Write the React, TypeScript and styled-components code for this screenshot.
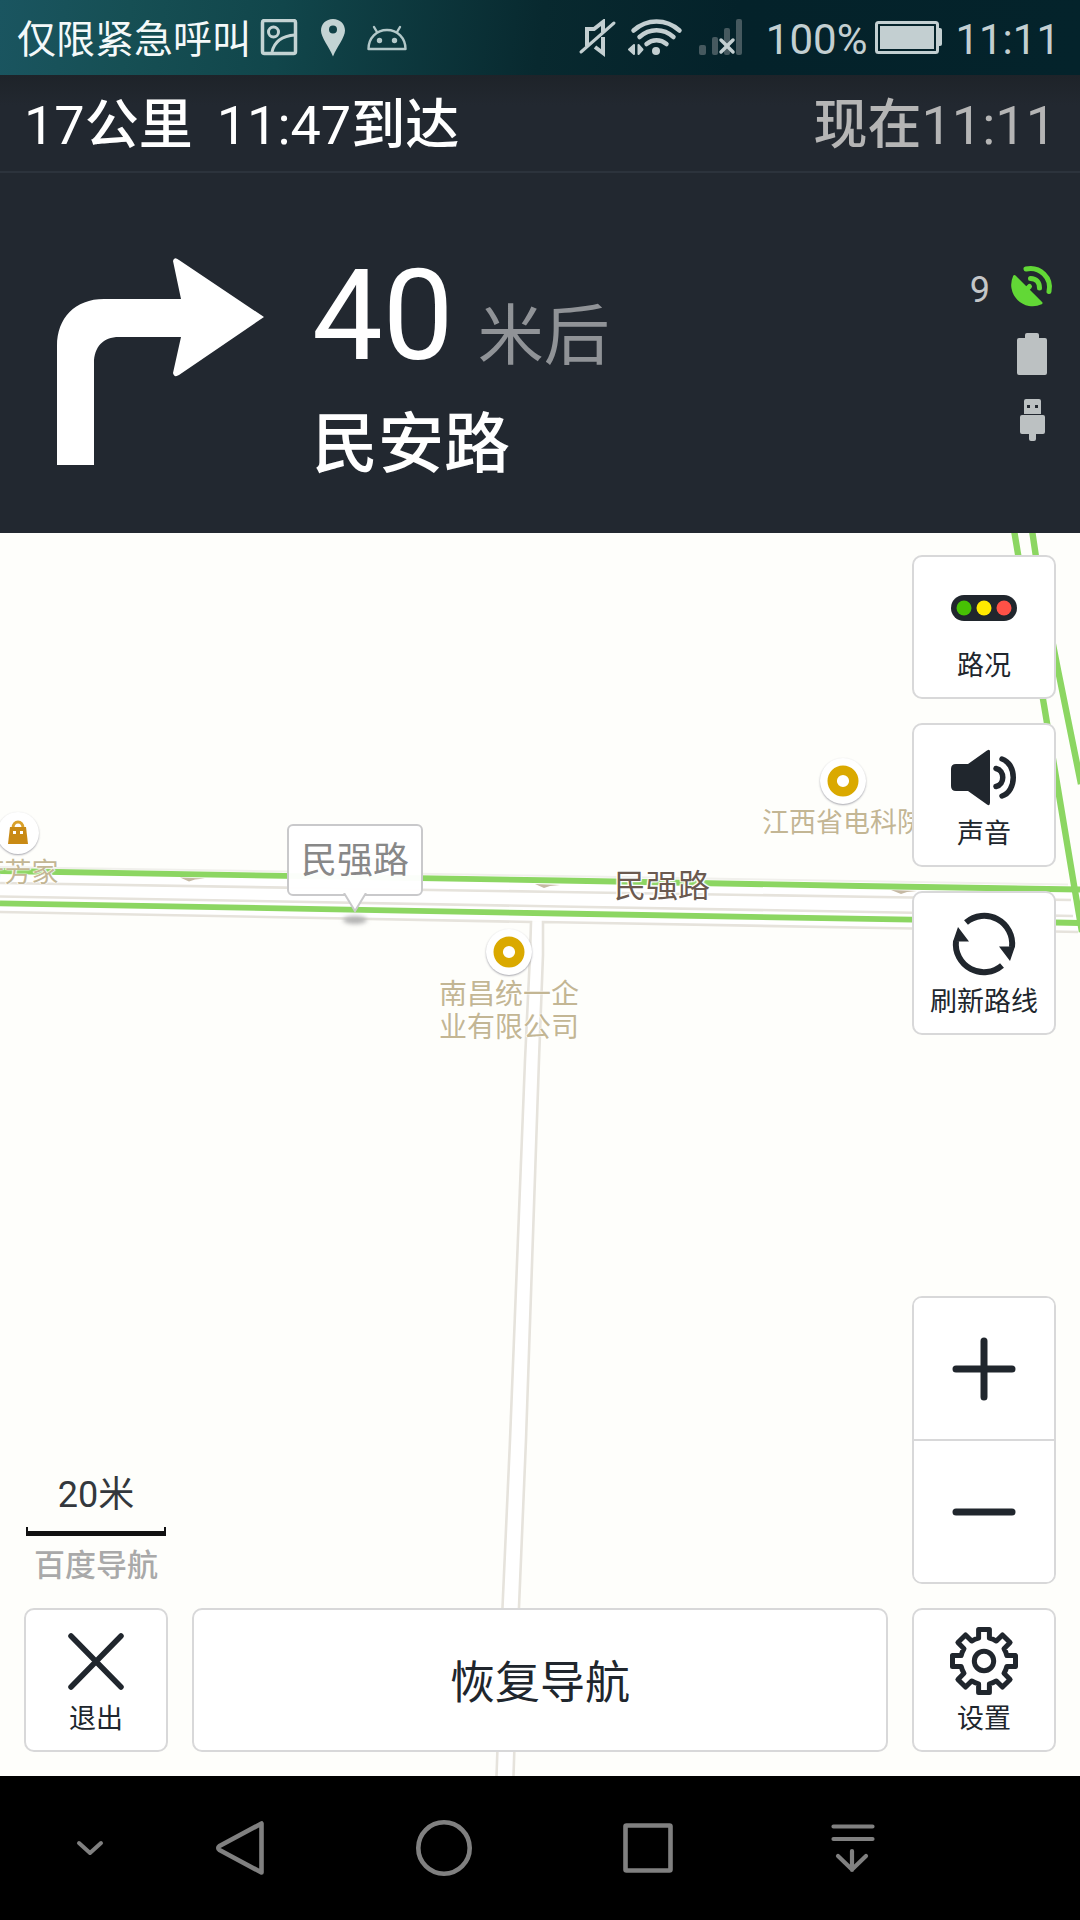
import React from "react";
import styled, { createGlobalStyle } from "styled-components";

const INK = "#20262d";
const PANEL = "#222830";

const GlobalStyle = createGlobalStyle`
  * { box-sizing: border-box; }
  body {
    margin: 0;
    background: #000;
    font-family: Roboto, "Noto Sans CJK SC", sans-serif;
  }
  button { font-family: inherit; }
`;

const Page = styled.main`
  display: flex;
  flex-direction: column;
  min-height: 100vh;
`;

/* ---------- status bar ---------- */

const StatusBar = styled.header`
  display: flex;
  align-items: center;
  justify-content: space-between;
  height: 75px;
  padding: 3px 20px 0 17px;
  color: #c3cfd1;
  background: linear-gradient(97deg, #1a5560 0%, #164f54 12%, #11464b 26%, #08292f 50%, #04222a 68%, #04232b 100%);
`;

const StatusGroup = styled.div`
  display: flex;
  align-items: center;
`;

const Carrier = styled.span`
  margin-right: 9px;
  padding-top: 2px;
  font-size: 39px;
  line-height: 44px;
  color: #f4f9f9;
`;

const StatusText = styled.span`
  padding-top: 2px;
  font-size: 42px;
  line-height: 44px;
`;

/* ---------- trip summary ---------- */

const TripBar = styled.section`
  display: flex;
  align-items: center;
  justify-content: space-between;
  height: 98px;
  padding: 6px 24px 0;
  border-bottom: 2px solid #2c333c;
  font-size: 54px;
  line-height: 64px;
  color: #fff;
  background: linear-gradient(#1e2329, ${PANEL} 30px);
`;

const TripInfo = styled.div`
  display: flex;
  gap: 24px;
`;

const TripUnit = styled.span`
  font-weight: 500;
`;

const CurrentTime = styled.span`
  color: #b5b5b5;
`;

/* ---------- turn instruction ---------- */

const TurnPanel = styled.section`
  display: flex;
  align-items: flex-start;
  gap: 48px;
  min-height: 360px;
  padding: 85px 26px 0 57px;
  color: #fff;
  background: ${PANEL};
`;

const TurnText = styled.div`
  display: flex;
  flex: 1;
  flex-direction: column;
  gap: 28px;
`;

const Distance = styled.div`
  display: flex;
  align-items: baseline;
  gap: 24px;
  font-size: 126px;
  line-height: 116px;
`;

const DistanceUnit = styled.span`
  font-size: 66px;
  line-height: 80px;
  color: #909397;
`;

const NextRoad = styled.div`
  font-size: 66px;
  font-weight: 500;
  line-height: 80px;
`;

const DeviceStatus = styled.div`
  display: flex;
  flex-direction: column;
  align-items: flex-end;
  gap: 23px;
  padding-top: 6px;
`;

const Satellites = styled.div`
  display: flex;
  align-items: center;
  gap: 20px;
  height: 44px;
  font-size: 36px;
  line-height: 44px;
  color: #c4c6c8;
`;

const SatelliteCount = styled.span`
  padding-top: 8px;
`;

/* ---------- map ---------- */

const MapArea = styled.section`
  position: relative;
  flex: 1;
  min-height: 1243px;
  overflow: hidden;
  background: #fefefb;
`;

const Roads = styled.svg`
  display: block;
  position: absolute;
  top: 0;
  left: 0;
  width: 100%;
  height: 100%;
`;

const Poi = styled.div<{ $x: number; $y: number }>`
  position: absolute;
  left: ${(p) => p.$x}px;
  top: ${(p) => p.$y}px;
  display: flex;
  flex-direction: column;
  align-items: center;
  gap: 3px;
  width: 0;
`;

const PoiDisc = styled.div<{ $size: number }>`
  display: flex;
  flex: none;
  align-items: center;
  justify-content: center;
  width: ${(p) => p.$size}px;
  height: ${(p) => p.$size}px;
  border-radius: 50%;
  background: #fff;
  box-shadow: 0 1px 2px rgba(60, 60, 80, 0.45);
`;

const PoiLabel = styled.div<{ $size: number }>`
  font-size: ${(p) => p.$size}px;
  line-height: 33px;
  text-align: center;
  white-space: pre;
  color: #c3b694;
  text-shadow: 0 0 2px #fff, 1px 0 1px #fff, -1px 0 1px #fff;
`;

const StreetName = styled.div`
  position: absolute;
  left: 614px;
  top: 333px;
  font-size: 32px;
  line-height: 40px;
  color: #6b5a50;
  text-shadow: 0 0 2px #fff, 1px 1px 1px #fff, -1px -1px 1px #fff, 1px -1px 1px #fff, -1px 1px 1px #fff;
`;

const Callout = styled.div`
  position: absolute;
  left: 287px;
  top: 291px;
  display: flex;
  flex-direction: column;
  align-items: center;
`;

const CalloutBox = styled.div`
  padding: 13px 12px 11px;
  border: 2px solid #c9c9cb;
  border-radius: 6px;
  font-size: 36px;
  line-height: 44px;
  color: #888;
  background: rgba(255, 255, 255, 0.97);
`;

const CalloutTail = styled.svg`
  margin-top: -3px;
`;

/* ---------- map controls ---------- */

const Controls = styled.div`
  position: absolute;
  inset: 0;
  display: flex;
  flex-direction: column;
  justify-content: space-between;
  padding: 22px 24px 24px;
`;

const SideButtons = styled.div`
  display: flex;
  flex-direction: column;
  align-self: flex-end;
  gap: 24px;
`;

const BottomControls = styled.div`
  display: flex;
  flex-direction: column;
  gap: 24px;
`;

const ControlRow = styled.div`
  display: flex;
  align-items: flex-end;
  justify-content: space-between;
`;

const ActionRow = styled.div`
  display: grid;
  grid-template-columns: 144px 1fr 144px;
  gap: 24px;
`;

const MapButton = styled.button`
  display: flex;
  flex-direction: column;
  align-items: center;
  justify-content: center;
  gap: 4px;
  min-width: 144px;
  height: 144px;
  padding: 2px 0 0;
  border: 2px solid #d8d8d9;
  border-radius: 10px;
  font-size: 27px;
  line-height: 36px;
  color: ${INK};
  background: #fff;
  cursor: pointer;
`;

const ResumeButton = styled(MapButton)`
  padding-top: 8px;
  font-size: 45px;
  line-height: 56px;
`;

const ZoomGroup = styled.div`
  display: flex;
  flex-direction: column;
  border: 2px solid #d8d8d9;
  border-radius: 10px;
  overflow: hidden;
  background: #fff;
`;

const ZoomButton = styled.button`
  display: flex;
  align-items: center;
  justify-content: center;
  width: 140px;
  height: 141px;
  padding: 0;
  border: 0;
  background: #fff;
  cursor: pointer;

  & + & {
    height: 143px;
    border-top: 2px solid #d8d8d9;
  }
`;

const Scale = styled.div`
  display: flex;
  flex-direction: column;
  align-items: center;
  gap: 10px;
  width: 144px;
`;

const ScaleText = styled.span`
  font-size: 36px;
  line-height: 44px;
  color: #33383d;
`;

const ScaleLine = styled.div`
  width: 140px;
  height: 9px;
  border: solid #111;
  border-width: 0 2px 5px;
`;

const Brand = styled.span`
  padding-top: 2px;
  font-size: 31px;
  line-height: 36px;
  font-weight: 500;
  color: #a9a9a9;
`;

/* ---------- system navigation ---------- */

const SystemBar = styled.nav`
  display: grid;
  grid-template-columns: 96fr 204fr 204fr 204fr 204fr 126fr;
  align-items: center;
  height: 144px;
  padding-left: 42px;
  background: #000;
`;

const SystemButton = styled.button`
  display: flex;
  align-items: center;
  justify-content: center;
  height: 144px;
  padding: 0;
  border: 0;
  background: none;
  cursor: pointer;
`;

/* ---------- icons ---------- */

const gearPath = (() => {
  const outer = 31.5;
  const inner = 23.5;
  const half = 5.4;
  const base = Math.sqrt(inner * inner - half * half);
  const at = (i: number, x: number, y: number) => {
    const a = (i * Math.PI) / 4;
    const px = 36 + x * Math.cos(a) - y * Math.sin(a);
    const py = 36 + x * Math.sin(a) + y * Math.cos(a);
    return `${px.toFixed(2)} ${py.toFixed(2)}`;
  };
  let d = "";
  for (let i = 0; i < 8; i++) {
    d += i === 0 ? `M${at(i, -half, -base)}` : `A${inner} ${inner} 0 0 1 ${at(i, -half, -base)}`;
    d += `L${at(i, -half, -outer)}L${at(i, half, -outer)}L${at(i, half, -base)}`;
  }
  return `${d}A${inner} ${inner} 0 0 1 ${at(0, -half, -base)}Z`;
})();

const Ring = () => (
  <svg width="32" height="32" viewBox="0 0 32 32" aria-hidden="true">
    <circle cx="16" cy="16" r="10.8" fill="#fff" stroke="#daa900" strokeWidth="9.4" />
  </svg>
);

const SysIcon = ({ children }: { children: React.ReactNode }) => (
  <svg width="60" height="60" viewBox="0 0 60 60" fill="none" stroke="#808080" strokeWidth="4.6" strokeLinejoin="round" strokeLinecap="round" aria-hidden="true">
    {children}
  </svg>
);

export default function App() {
  return (
    <Page>
      <GlobalStyle />

      <StatusBar>
        <StatusGroup>
          <Carrier>仅限紧急呼叫</Carrier>
          <svg width="59" height="40" viewBox="260 19 59 40" fill="none" stroke="#c3d3d3" strokeWidth="3" aria-hidden="true">
            <rect x="262.5" y="20.5" width="33" height="33" rx="2" strokeWidth="3.5" />
            <circle cx="273.5" cy="32" r="5" />
            <path d="M272 52c2-9 9-16 23-17" />
          </svg>
          <svg width="48" height="40" viewBox="319 19 48 40" aria-hidden="true">
            <path fillRule="evenodd" fill="#c3d3d3" d="M333 19c7 0 12 5 12 11.500 0 7-8 16-12 26-4-10-12-19-12-26 0-6.500 5-11.500 12-11.500zm0 6.500a4 4 0 1 0 0 8 4 4 0 0 0 0-8z" />
          </svg>
          <svg width="42" height="40" viewBox="367 19 42 40" fill="none" stroke="#b3c8c9" strokeWidth="2.4" strokeLinecap="round" aria-hidden="true">
            <path d="M368.500 49c0-11 8-19 18.500-19s18.500 8 18.500 19zM377 32l-3-5M397 32l3-5" strokeLinejoin="round" />
            <circle cx="379.5" cy="40.5" r="1.5" fill="#b3c8c9" />
            <circle cx="394.5" cy="40.5" r="1.5" fill="#b3c8c9" />
          </svg>
        </StatusGroup>
        <StatusGroup>
          <svg width="46" height="40" viewBox="576 19 46 40" fill="none" stroke="#c3cfd1" strokeWidth="4" aria-hidden="true">
            <path d="M587 46V29h7l9-7v10M595 47l8 6V37" />
            <path d="M581 52l33-29" strokeWidth="3" strokeLinecap="round" />
          </svg>
          <svg width="68" height="40" viewBox="622 19 68 40" fill="none" stroke="#c3cfd1" strokeWidth="4.5" strokeLinecap="round" aria-hidden="true">
            <path d="M633 31c0 0 1 0 0 0M635.500 30c12.500-11 29.500-11 42 0M640.500 37.500c9.500-8.500 22.500-8.500 32 0M647.500 44.500c5.500-4.500 13-4.500 18.500 0" stroke="none" />
            <path d="M633.500 30.500c13.500-12 32.500-12 46 0M639.500 37c10-9 24-9 34 0M646.500 44c6-5 14-5 20 0" />
            <circle cx="656" cy="51" r="4" fill="#c3cfd1" stroke="none" />
            <path d="M634 45v9l-5-4.500zM638.500 45v9l4-4.500z" fill="#c3cfd1" strokeWidth="2" strokeLinejoin="round" />
          </svg>
          <svg width="76" height="40" viewBox="690 19 76 40" aria-hidden="true">
            <g fill="#46595f">
              <rect x="699" y="45" width="7" height="10" rx="2" />
              <rect x="712" y="37" width="6" height="18" rx="2" />
              <rect x="724" y="28" width="6" height="27" rx="2" />
              <rect x="736" y="19" width="6" height="36" rx="2" />
            </g>
            <path d="M721 40l12 12M733 40l-12 12" stroke="#c3cfd1" strokeWidth="3.5" strokeLinecap="round" />
          </svg>
          <StatusText>100%</StatusText>
          <svg width="88" height="40" viewBox="867 19 88 40" aria-hidden="true">
            <rect x="876.5" y="22.5" width="61" height="30" rx="2" fill="none" stroke="#c3cfd1" strokeWidth="3" />
            <rect x="880" y="26" width="54" height="23" fill="#c3cfd1" />
            <path d="M938 28h2q2 0 2 2v14q0 2-2 2h-2z" fill="#c3cfd1" />
          </svg>
          <StatusText>11:11</StatusText>
        </StatusGroup>
      </StatusBar>

      <TripBar>
        <TripInfo>
          <span>17<TripUnit>公里</TripUnit></span>
          <span>11:47<TripUnit>到达</TripUnit></span>
        </TripInfo>
        <CurrentTime><TripUnit>现在</TripUnit>11:11</CurrentTime>
      </TripBar>

      <TurnPanel>
        <svg width="207" height="207" viewBox="0 0 207 207" role="img" aria-label="右转">
          <path fill="#fff" d="M0 207V88C0 60 18 41 47 41H124L116 3Q117-2 122 2L207 59 122 117Q117 120 116 115L124 79H62C46 79 37 89 37 105V207Z" />
        </svg>
        <TurnText>
          <Distance>
            40<DistanceUnit>米后</DistanceUnit>
          </Distance>
          <NextRoad>民安路</NextRoad>
        </TurnText>
        <DeviceStatus>
          <Satellites>
            <SatelliteCount>9</SatelliteCount>
            <svg width="44" height="44" viewBox="0 0 44 44" fill="none" stroke="#62d836" strokeWidth="5" strokeLinecap="round" aria-hidden="true">
              <path d="M4.500 12.500L31 39A20 20 0 0 1 4.500 12.500z" fill="#62d836" strokeWidth="3" strokeLinejoin="round" />
              <path d="M16 26l3.500-3.500M20.500 14.500c6 0 9 4 9 9.500M16 5c14-3 26 9 23 22.500" />
            </svg>
          </Satellites>
          <svg width="44" height="44" viewBox="0 0 44 44" fill="#bcc1c2" aria-hidden="true">
            <path d="M7 9q0-2 2-2h6V4q0-2 2-2h10q2 0 2 2v3h6q2 0 2 2v33q0 2-2 2H9q-2 0-2-2z" />
          </svg>
          <svg width="44" height="44" viewBox="0 0 44 44" fill="#bcc1c2" aria-hidden="true">
            <path fillRule="evenodd" d="M14 3q0-2 2-2h13q2 0 2 2v13H14zM17 7v3h3V7zM25 7v3h3V7z" />
            <path d="M10 19q0-2 2-2h21q2 0 2 2v15q0 2-2 2h-7v5q0 2-2 2h-3q-2 0-2-2v-5h-7q-2 0-2-2z" />
          </svg>
        </DeviceStatus>
      </TurnPanel>

      <MapArea>
        <Roads viewBox="0 533 1080 1243" preserveAspectRatio="xMidYMin slice" aria-hidden="true">
          <path d="M530 922L524 1060 509 1440 501 1607 495 1776H514L519 1607 527 1440 540 1060 544 922z" fill="#fff" />
          <path d="M0 868L1080 885V931L0 912z" fill="#fff" />
          <g fill="none" stroke="#e6e3dc" strokeWidth="2.6">
            <path d="M0 883L560 892 912 897.500 1071 900" />
            <path d="M0 896.500L560 906.500 912 912.700 1073 916" />
            <path d="M0 912L531 922 530 955 525 1060 510 1440 502.500 1607 496.500 1776" />
            <path d="M1078 932L912 928.500 543 922 543 955 539 1060 526 1440 519 1607 513.500 1776" />
            <path d="M0 867L560 876 1068 884.500" stroke="#f1f0ec" strokeWidth="2" />
          </g>
          <g fill="none" stroke="#8cd662" strokeWidth="5.8">
            <path d="M0 871L560 880.500 860 886 1080 889.500" />
            <path d="M0 903.300L560 913.500 912 919.700 1080 923" />
            <path d="M1014 530L1019 560 1044 705 1074 885 1082 932M1032 530L1036 557 1058 670 1081 784" strokeWidth="6.4" />
          </g>
          <g fill="#c5b9a3">
            <path d="M180 877.500L205 878.500 195 879.500 189 881.500zM535 884L560 885 550 886 544 888zM891 890L917 891 907 892 901 894z" />
          </g>
        </Roads>

        <Poi $x={18} $y={279}>
          <PoiDisc $size={42}>
            <svg width="24" height="28" viewBox="0 0 24 28" aria-hidden="true">
              <path d="M7 9C7 1 17 1 17 9" fill="none" stroke="#daa12a" strokeWidth="3" />
              <path d="M4 8h16l2 17H2z" fill="#c98a15" />
              <path d="M7 12h3v3H7zM14 12h3v3h-3z" fill="#fff" />
            </svg>
          </PoiDisc>
          <PoiLabel $size={27}>芳芳家</PoiLabel>
        </Poi>
        <Poi $x={843} $y={225}>
          <PoiDisc $size={46}><Ring /></PoiDisc>
          <PoiLabel $size={27}>江西省电科院</PoiLabel>
        </Poi>
        <Poi $x={509} $y={396}>
          <PoiDisc $size={46}><Ring /></PoiDisc>
          <PoiLabel $size={28}>{"南昌统一企\n业有限公司"}</PoiLabel>
        </Poi>
        <StreetName>民强路</StreetName>
        <Callout>
          <CalloutBox>民强路</CalloutBox>
          <CalloutTail width="40" height="36" viewBox="0 0 40 36" aria-hidden="true">
            <defs>
              <filter id="soft" x="-50%" y="-100%" width="200%" height="300%">
                <feGaussianBlur stdDeviation="2" />
              </filter>
            </defs>
            <ellipse cx="20" cy="27" rx="12" ry="4" fill="#b4b4b4" filter="url(#soft)" />
            <path d="M9 0L20 18 31 0" fill="#fff" stroke="#c9c9cb" strokeWidth="2" />
          </CalloutTail>
        </Callout>

        <Controls>
          <SideButtons>
            <MapButton type="button">
              <svg width="72" height="72" viewBox="0 0 72 72" aria-hidden="true">
                <rect x="3" y="23" width="66" height="26" rx="13" fill={INK} />
                <circle cx="16" cy="36" r="7.5" fill="#47c104" />
                <circle cx="36" cy="36" r="7.5" fill="#ffea00" />
                <circle cx="56" cy="36" r="7.5" fill="#ff5147" />
              </svg>
              路况
            </MapButton>
            <MapButton type="button">
              <svg width="72" height="72" viewBox="0 0 72 72" aria-hidden="true">
                <path d="M3 29q0-5 5-5h12L39 10.500q3-2 3 1v51q0 4-3 2L20 51H8q-5 0-5-5z" fill={INK} />
                <path d="M48 28.500c9 2 9 16 0 18M54 19c15 5 15 32 0 37" fill="none" stroke={INK} strokeWidth="5.5" strokeLinecap="round" />
              </svg>
              声音
            </MapButton>
            <MapButton type="button">
              <svg width="72" height="72" viewBox="0 0 72 72" aria-hidden="true">
                <g fill="none" stroke={INK} strokeWidth="6">
                  <path d="M18 14.500A28 28 0 0 1 64 39" />
                  <path d="M54 57.500A28 28 0 0 1 8 33" />
                </g>
                <path d="M51 38.500H67L62 53zM21 33.500H5L10 19z" fill={INK} />
              </svg>
              刷新路线
            </MapButton>
          </SideButtons>

          <BottomControls>
            <ControlRow>
              <Scale>
                <ScaleText>20米</ScaleText>
                <ScaleLine />
                <Brand>百度导航</Brand>
              </Scale>
              <ZoomGroup>
                <ZoomButton type="button" aria-label="放大">
                  <svg width="72" height="72" viewBox="0 0 72 72" aria-hidden="true">
                    <path d="M8 36H64M36 8V64" stroke={INK} strokeWidth="7" strokeLinecap="round" />
                  </svg>
                </ZoomButton>
                <ZoomButton type="button" aria-label="缩小">
                  <svg width="72" height="72" viewBox="0 0 72 72" aria-hidden="true">
                    <path d="M8 36H64" stroke={INK} strokeWidth="7" strokeLinecap="round" />
                  </svg>
                </ZoomButton>
              </ZoomGroup>
            </ControlRow>
            <ActionRow>
              <MapButton type="button">
                <svg width="72" height="72" viewBox="0 0 72 72" aria-hidden="true">
                  <path d="M11 11L61 62M61 11L11 62" stroke={INK} strokeWidth="5.5" strokeLinecap="round" />
                </svg>
                退出
              </MapButton>
              <ResumeButton type="button">恢复导航</ResumeButton>
              <MapButton type="button">
                <svg width="72" height="72" viewBox="0 0 72 72" fill="none" stroke={INK} strokeWidth="5" strokeLinejoin="round" aria-hidden="true">
                  <path d={gearPath} />
                  <circle cx="36" cy="36" r="9.7" />
                </svg>
                设置
              </MapButton>
            </ActionRow>
          </BottomControls>
        </Controls>
      </MapArea>

      <SystemBar>
        <SystemButton type="button" aria-label="隐藏导航栏">
          <SysIcon><path d="M19 25L30 35 41 25" strokeWidth="4" /></SysIcon>
        </SystemButton>
        <SystemButton type="button" aria-label="返回">
          <SysIcon><path d="M51.500 5.500V54.500L9.500 32Q7 30 9.500 28Z" /></SysIcon>
        </SystemButton>
        <SystemButton type="button" aria-label="主屏幕">
          <SysIcon><circle cx="30" cy="30" r="25.7" /></SysIcon>
        </SystemButton>
        <SystemButton type="button" aria-label="最近任务">
          <SysIcon><rect x="7.5" y="7.5" width="45" height="45" rx="1" /></SysIcon>
        </SystemButton>
        <SystemButton type="button" aria-label="通知栏">
          <SysIcon><path d="M11.500 8.500H50.500M11.500 21H50.500M30 33V52M16 38L30 51.500 44 38" strokeWidth="4.2" /></SysIcon>
        </SystemButton>
      </SystemBar>
    </Page>
  );
}
